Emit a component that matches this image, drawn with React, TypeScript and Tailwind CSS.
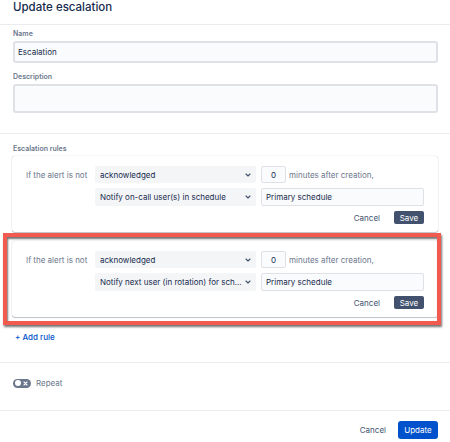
import React from "react";

function Chevron() {
  return (
    <svg width="8" height="8" viewBox="0 0 8 8" className="shrink-0">
      <path d="M2 3 L4 5 L6 3" fill="none" stroke="#42526e" strokeWidth="1.1" strokeLinecap="round" strokeLinejoin="round" />
    </svg>
  );
}

function Select({ text }: { text: string }) {
  return (
    <div className="w-[161px] h-full bg-[#f4f5f7] rounded-[2px] flex items-center pl-[5px] pr-[4px] gap-[2px]">
      <span className="flex-1 truncate text-[8px] text-[#172b4d]">{text}</span>
      <Chevron />
    </div>
  );
}

function RuleCard({ action }: { action: string }) {
  return (
    <div className="bg-white rounded-[3px] shadow-[0_1px_1px_rgba(9,30,66,0.25),0_0_1px_rgba(9,30,66,0.31)] pt-[10px] pb-[8px] pl-[14px] pr-[14px]">
      <div className="flex items-center h-[17px]">
        <div className="w-[69px] text-[8px] text-[#6b778c]">If the alert is not</div>
        <Select text="acknowledged" />
        <div className="ml-[5px] w-[25px] h-full border border-[#dfe1e6] bg-[#fafbfc] rounded-[2px] flex items-center justify-center text-[8px] text-[#172b4d]">0</div>
        <div className="ml-[3px] text-[8px] text-[#6b778c]">minutes after creation,</div>
      </div>
      <div className="flex items-center h-[18px] mt-[5px]">
        <div className="w-[69px]" />
        <Select text={action} />
        <div className="ml-[5px] flex-1 h-full border border-[#dfe1e6] bg-[#fafbfc] rounded-[2px] flex items-center pl-[4px] text-[8px] text-[#172b4d]">Primary schedule</div>
      </div>
      <div className="flex items-center justify-end h-[13px] mt-[5px]">
        <span className="text-[8px] text-[#42526e]">Cancel</span>
        <button className="ml-[14px] w-[30px] h-full bg-[#42526e] rounded-[2px] text-white text-[8px] flex items-center justify-center">Save</button>
      </div>
    </div>
  );
}

export default function App() {
  return (
    <div className="w-[450px] h-[442px] bg-white overflow-hidden font-['Inter',sans-serif]">
      <div className="h-[25px] border-b border-[#ebecf0] pl-[13px]">
        <div className="text-[11.5px] leading-[14px] font-medium text-[#172b4d]">Update escalation</div>
      </div>
      <div className="pl-[13px] pr-[12px] pt-[4px] pb-[20px] border-b border-[#ebecf0]">
        <div className="text-[7px] leading-[10px] font-semibold text-[#6b778c]">Name</div>
        <div className="mt-[2px] h-[22px] border-2 border-[#dfe1e6] bg-[#fafbfc] rounded-[3px] flex items-center pl-[3px] text-[8px] text-[#172b4d]">Escalation</div>
        <div className="mt-[9px] text-[7px] leading-[10px] font-semibold text-[#6b778c]">Description</div>
        <div className="mt-[2px] h-[29px] border-2 border-[#dfe1e6] bg-[#fafbfc] rounded-[3px]" />
      </div>
      <div className="pl-[12px] pr-[12px] pt-[10px] pb-[20px] border-b border-[#ebecf0]">
        <div className="pl-[1px] text-[7px] leading-[10px] font-semibold text-[#6b778c]">Escalation rules</div>
        <div className="mt-[2px]">
          <RuleCard action="Notify on-call user(s) in schedule" />
        </div>
        <div className="mt-[9px] relative">
          <RuleCard action="Notify next user (in rotation) for schedule" />
          <div className="absolute -left-[9px] -top-[8px] -right-[3px] -bottom-[8px] border-[4px] border-[#f25a4f] shadow-[1px_2px_2px_rgba(0,0,0,0.55),inset_1px_2px_2px_rgba(0,0,0,0.55)] pointer-events-none" />
        </div>
        <div className="mt-[15px] pl-[3px] text-[8px] leading-[10px] font-medium text-[#0052cc]">+ Add rule</div>
      </div>
      <div className="pl-[13px] pt-[14px] pb-[21px] border-b border-[#ebecf0]">
        <div className="h-[12px] flex items-center">
          <div className="w-[18px] h-[9px] rounded-full bg-[#6b778c] relative flex items-center">
            <div className="absolute left-[1.5px] w-[6px] h-[6px] rounded-full bg-white" />
            <svg width="5" height="5" viewBox="0 0 5 5" className="absolute right-[3px]">
              <path d="M1 1 L4 4 M4 1 L1 4" stroke="white" strokeWidth="1.1" strokeLinecap="round" />
            </svg>
          </div>
          <span className="ml-[5px] text-[8px] text-[#6b778c]">Repeat</span>
        </div>
      </div>
      <div className="pr-[12px] pt-[10px] flex justify-end items-center">
        <span className="text-[8px] text-[#42526e]">Cancel</span>
        <button className="ml-[12px] w-[40px] h-[18px] bg-[#0052cc] rounded-[3px] text-white text-[8px] flex items-center justify-center">Update</button>
      </div>
    </div>
  );
}
